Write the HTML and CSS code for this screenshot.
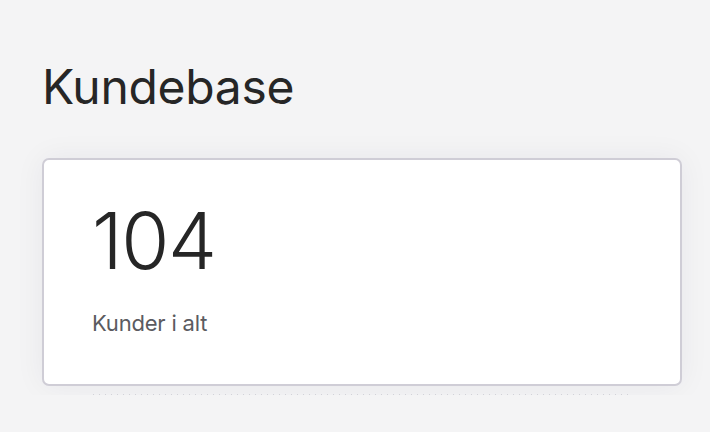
FILE: index.html
```html
<!DOCTYPE html>
<html lang="da">
<head>
<meta charset="utf-8">
<link rel="stylesheet" href="styles.css">
</head>
<body>
<main class="page">
  <h1 class="title">Kundebase</h1>
  <section class="card">
    <div class="stat-value">104</div>
    <div class="stat-label">Kunder i alt</div>
  </section>
  <div class="dots"></div>
</main>
</body>
</html>
```
FILE: styles.css
```css
html, body {
  margin: 0;
  padding: 0;
  background: #f4f4f5;
  font-family: Inter, "Noto Sans", sans-serif;
  color: #262626;
}
.page {
  padding: 58px 29px 0 42px;
}
.title {
  margin: 0;
  font-size: 48px;
  font-weight: 400;
  line-height: 58px;
  letter-spacing: -0.3px;
  color: #262626;
}
.card {
  margin-top: 42px;
  width: 636px;
  height: 224px;
  box-sizing: content-box;
  background: #ffffff;
  border: 2px solid #cfcdd6;
  border-radius: 7px;
  box-shadow: 0 0 30px rgba(40, 40, 70, 0.06);
  padding: 0;
}
.stat-value {
  padding: 34px 0 0 48px;
  font-size: 78px;
  font-weight: 300;
  line-height: 94px;
  letter-spacing: -1.5px;
  color: #262626;
}
.stat-label {
  padding: 22px 0 0 48px;
  font-size: 22px;
  line-height: 27px;
  color: #5b5b5f;
  letter-spacing: -0.2px;
}
.dots {
  margin: 8px 0 0 51px;
  width: 536px;
  height: 1px;
  background: repeating-linear-gradient(90deg, #d2d2d8 0 1px, transparent 1px 6px);
}
```
